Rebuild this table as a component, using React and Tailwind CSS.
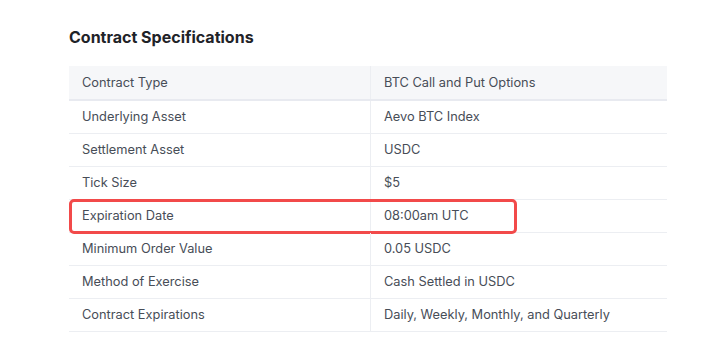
const rows = [
  ['Underlying Asset', 'Aevo BTC Index'],
  ['Settlement Asset', 'USDC'],
  ['Tick Size', '$5'],
  ['Expiration Date', '08:00am UTC', true],
  ['Minimum Order Value', '0.05 USDC'],
  ['Method of Exercise', 'Cash Settled in USDC'],
  ['Contract Expirations', 'Daily, Weekly, Monthly, and Quarterly'],
];

export default function App() {
  return (
    <div className="w-[720px] h-[355px] bg-white overflow-hidden font-['Inter','Liberation_Sans',sans-serif]">
      <div className="pl-[69px] pt-[25px] w-[667px]">
        <h2 className="text-[16px] leading-[24px] font-bold text-[#1f2328]">Contract Specifications</h2>

        <div className="mt-[17px] text-[12.8px] text-[#474d57]">
          {/* Header */}
          <div className="flex h-[35px] bg-[#f6f7f9] border-b-2 border-[#e8eaf0]">
            <div className="w-[302px] pl-[13px] pt-[1px] flex items-center border-r border-[#eceef2]">Contract Type</div>
            <div className="flex-1 pl-[13px] pt-[1px] flex items-center">BTC Call and Put Options</div>
          </div>

          {rows.map(([label, value, hl]) => (
            <div key={label} className="relative flex h-[33px] border-b border-[#eceef2]">
              <div className="w-[302px] pl-[13px] flex items-center border-r border-[#eceef2]">{label}</div>
              <div className="flex-1 pl-[13px] flex items-center">{value}</div>
              {hl && (
                <div className="absolute left-0 top-[-1px] w-[448px] h-[35px] border-[3px] border-[#f24a4a] rounded-[5px]" />
              )}
            </div>
          ))}
        </div>
      </div>
    </div>
  );
}
